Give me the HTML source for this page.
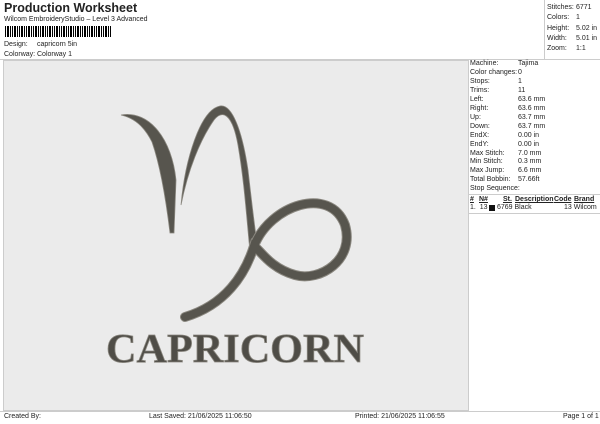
<!DOCTYPE html>
<html><head><style>
*{margin:0;padding:0;box-sizing:border-box}
body{width:600px;height:424px;background:#fff;font-family:"Liberation Sans",sans-serif;color:#222;position:relative;overflow:hidden;font-size:7px}
.a{position:absolute;white-space:nowrap}
</style></head><body>
<div class="a" style="left:4px;top:1px;font-size:12.5px;font-weight:bold">Production Worksheet</div>
<div class="a" style="left:4px;top:16px;font-size:7px">Wilcom EmbroideryStudio – Level 3 Advanced</div>
<div class="a" style="left:5px;top:26px;width:106px;height:11px;background:repeating-linear-gradient(90deg,#000 0 1px,#fff 1px 2px,#000 2px 4px,#fff 4px 5px,#000 5px 6px,#fff 6px 7px)"></div>
<div class="a" style="left:4px;top:41px">Design:</div><div class="a" style="left:37px;top:41px">capricorn 5in</div>
<div class="a" style="left:4px;top:51px">Colorway:</div><div class="a" style="left:37px;top:51px">Colorway 1</div>
<div class="a" style="left:3px;top:60px;width:466px;height:351px;background:#ebebeb;border:1px solid #ccc"></div>
<div class="a" style="left:544px;top:0;width:1px;height:60px;background:#ccc"></div>
<div class="a" style="left:0;top:59px;width:600px;height:1px;background:#ccc"></div>
<div class="a" style="left:547px;top:3px;line-height:10.3px">Stitches:<br>Colors:<br>Height:<br>Width:<br>Zoom:</div>
<div class="a" style="left:576px;top:3px;line-height:10.3px">6771<br>1<br>5.02 in<br>5.01 in<br>1:1</div>
<div class="a" style="left:470px;top:60px;line-height:8.95px">Machine:<br>Color changes:<br>Stops:<br>Trims:<br>Left:<br>Right:<br>Up:<br>Down:<br>EndX:<br>EndY:<br>Max Stitch:<br>Min Stitch:<br>Max Jump:<br>Total Bobbin:<br>Stop Sequence:</div>
<div class="a" style="left:518px;top:60px;line-height:8.95px">Tajima<br>0<br>1<br>11<br>63.6 mm<br>63.6 mm<br>63.7 mm<br>63.7 mm<br>0.00 in<br>0.00 in<br>7.0 mm<br>0.3 mm<br>6.6 mm<br>57.66ft</div>
<div class="a" style="left:469px;top:194px;width:131px;height:1px;background:#ccc"></div>
<div class="a" style="left:469px;top:213px;width:131px;height:1px;background:#ccc"></div>
<div class="a" style="left:470px;top:196px;font-weight:bold;text-decoration:underline">#</div>
<div class="a" style="left:479px;top:196px;font-weight:bold;text-decoration:underline">N#</div>
<div class="a" style="left:503px;top:196px;font-weight:bold;text-decoration:underline">St.</div>
<div class="a" style="left:515px;top:196px;font-weight:bold;text-decoration:underline">Description</div>
<div class="a" style="left:554px;top:196px;font-weight:bold;text-decoration:underline">Code</div>
<div class="a" style="left:574px;top:196px;font-weight:bold;text-decoration:underline">Brand</div>
<div class="a" style="left:470px;top:204px">1.&nbsp; 13</div>
<div class="a" style="left:489px;top:205px;width:6px;height:6px;background:#111"></div>
<div class="a" style="left:497px;top:204px">6769 Black</div>
<div class="a" style="left:564px;top:204px">13 Wilcom</div>
<div class="a" style="left:0;top:411px;width:600px;height:1px;background:#ccc"></div>
<div class="a" style="left:4px;top:413px">Created By:</div>
<div class="a" style="left:149px;top:413px">Last Saved: 21/06/2025 11:06:50</div>
<div class="a" style="left:355px;top:413px">Printed: 21/06/2025 11:06:55</div>
<div class="a" style="left:563px;top:413px">Page 1 of 1</div>
<svg class="a" style="left:0;top:0" width="600" height="424">
<g fill="#57554e" stroke="#8a877f" stroke-width="0.8">
<path d="M121,115 C150,110 172,140 176,180 L174,233 L170,233 C166,200 160,165 152,142 C144,126 134,118 121,115 Z"/>
<path d="M181,205 C185,160 200,110 220,106 C232,104 242,130 248,170 C252,205 256,240 258,248 L250,252 C246,210 244,180 238,145 C232,112 222,110 214,120 C200,140 188,170 181,205 Z"/>
</g>
<g fill="none" stroke-linecap="round">
<path d="M254,246 C270,205 330,185 345,225 C355,260 320,282 295,275 C270,268 260,250 254,246 C245,275 225,305 185,317" stroke="#8a877f" stroke-width="10"/>
<path d="M254,246 C270,205 330,185 345,225 C355,260 320,282 295,275 C270,268 260,250 254,246 C245,275 225,305 185,317" stroke="#57554e" stroke-width="8"/>
</g>
<text x="106" y="362" textLength="258" lengthAdjust="spacingAndGlyphs" font-family="Liberation Serif,serif" font-weight="bold" font-size="41" fill="#4f4d47" stroke="#8a877f" stroke-width="0.8">CAPRICORN</text>
</svg>
</body></html>
